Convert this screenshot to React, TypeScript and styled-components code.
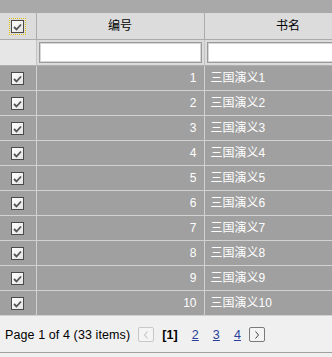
import React from "react"
import styled, { createGlobalStyle } from "styled-components"

//----------------------------------------------------------
//-- Grid with filter row + pager
//----------------------------------------------------------
const FONT = `"Liberation Sans", "Noto Sans CJK SC", sans-serif`

const GlobalStyle = createGlobalStyle`
  html, body {
    margin: 0;
    padding: 0;
    background: #f0f0f0;
  }
  body {
    font-family: ${ FONT };
    font-size: 12px;
  }
`

const GridWrap = styled.div`
  width: 332px;
  height: 357px;
  overflow: hidden;
  background: #f0f0f0;
`

const TopBar = styled.div`
  height: 13px;
  width: 372px;
  background: #a9a9a9;
`

const Table = styled.table`
  width: 372px;
  table-layout: fixed;
  border-collapse: collapse;
  border-spacing: 0;
`

const HeadCell = styled.th`
  height: 26px;
  padding: 0;
  background: #dcdcdc;
  border-right: 1px solid #ababab;
  border-bottom: 1px solid #ababab;
  font-weight: normal;
  color: #000;
  text-align: center;
  vertical-align: middle;
  line-height: 14px;
`

const FilterCell = styled.td<{ $first?: boolean }>`
  height: 25px;
  padding: 0 2px;
  background: ${ (p) => (p.$first ? "#e6e6e6" : "#dcdcdc") };
  border-right: 1px solid #c4c4c4;
  border-bottom: 1px solid #b0b0b0;
  vertical-align: middle;
`

const FilterInput = styled.input`
  display: block;
  box-sizing: border-box;
  width: 100%;
  height: 21px;
  margin: 0;
  border: 1px solid #9a9a9a;
  box-shadow: inset 0 0 0 1px #d6d6d6;
  background: #fff;
  outline: none;
`

const DataCell = styled.td<{ $align?: "left" | "right" | "center" }>`
  height: 24px;
  padding: ${ (p) => (p.$align === "right" ? "0 7px 0 0" : p.$align === "left" ? "0 0 0 6px" : "0") };
  background: #a0a0a0;
  color: #fff;
  text-align: ${ (p) => p.$align || "center" };
  border-right: 1px solid #d2d2d2;
  border-bottom: 1px solid #d2d2d2;
  vertical-align: middle;
  white-space: nowrap;
  line-height: 14px;
`

const CheckBox = styled.span<{ $focus?: boolean }>`
  display: inline-flex;
  align-items: center;
  justify-content: center;
  box-sizing: border-box;
  width: 13px;
  height: 13px;
  border: 1px solid #4a4a4a;
  background: linear-gradient(135deg, #ffffff 0%, #e4e4e4 100%);
  vertical-align: middle;
  outline: ${ (p) => (p.$focus ? "1px dotted #e6c200" : "none") };
  outline-offset: 1px;
`

const Footer = styled.div`
  display: flex;
  align-items: center;
  height: 35px;
  padding: 1px 0 0 5px;
  background: #f0f0f0;
  border-bottom: 1px solid #a0a0a0;
  color: #000;
  font-size: 12.5px;
  letter-spacing: 0.1px;
`

const PagerSummary = styled.span`
  margin-right: 4px;
`

const PagerButton = styled.span<{ $disabled?: boolean; $left?: number }>`
  display: inline-flex;
  align-items: center;
  justify-content: center;
  box-sizing: border-box;
  width: 16px;
  height: 15px;
  border: 1px solid ${ (p) => (p.$disabled ? "#c8c8c8" : "#7a7a7a") };
  border-radius: 2px;
  background: #f4f4f4;
  margin: 0 4px 0 ${ (p) => p.$left ?? 4 }px;
`

const CurrentPage = styled.span`
  font-weight: bold;
  margin: 0 6px 0 4px;
`

const PageLink = styled.a`
  color: #2a3f9a;
  text-decoration: underline;
  margin: 0 6px 0 8px;
`

const Tick = () => (
  <svg width="9" height="8" viewBox="0 0 9 8">
    <path d="M1 4 L3.5 6.5 L8 1.5" fill="none" stroke="#555" strokeWidth="1.8" />
  </svg>
)

const Chevron = ({ dir, color }: { dir: "l" | "r"; color: string }) => (
  <svg width="6" height="8" viewBox="0 0 6 8">
    <path
      d={dir === "l" ? "M4.5 0.5 L1.5 4 L4.5 7.5" : "M1.5 0.5 L4.5 4 L1.5 7.5"}
      fill="none"
      stroke={color}
      strokeWidth="1"
    />
  </svg>
)

const rows = Array.from({ length: 10 }, (_, i) => ({ id: i + 1, name: `三国演义${ i + 1 }` }))

export default function App()
{
  return (
    <GridWrap>
      <GlobalStyle />
      <TopBar />
      <Table>
        <colgroup>
          <col style={{ width: 36 }} />
          <col style={{ width: 168 }} />
          <col style={{ width: 168 }} />
        </colgroup>
        <thead>
          <tr>
            <HeadCell>
              <CheckBox $focus><Tick /></CheckBox>
            </HeadCell>
            <HeadCell>编号</HeadCell>
            <HeadCell>书名</HeadCell>
          </tr>
          <tr>
            <FilterCell $first />
            <FilterCell><FilterInput /></FilterCell>
            <FilterCell><FilterInput /></FilterCell>
          </tr>
        </thead>
        <tbody>
          {rows.map((r) => (
            <tr key={r.id}>
              <DataCell><CheckBox><Tick /></CheckBox></DataCell>
              <DataCell $align="right">{r.id}</DataCell>
              <DataCell $align="left">{r.name}</DataCell>
            </tr>
          ))}
        </tbody>
      </Table>
      <Footer>
        <PagerSummary>Page 1 of 4 (33 items)</PagerSummary>
        <PagerButton $disabled><Chevron dir="l" color="#b8b8b8" /></PagerButton>
        <CurrentPage>[1]</CurrentPage>
        <PageLink href="#">2</PageLink>
        <PageLink href="#">3</PageLink>
        <PageLink href="#">4</PageLink>
        <PagerButton $left={2}><Chevron dir="r" color="#444" /></PagerButton>
      </Footer>
    </GridWrap>
  )
}
